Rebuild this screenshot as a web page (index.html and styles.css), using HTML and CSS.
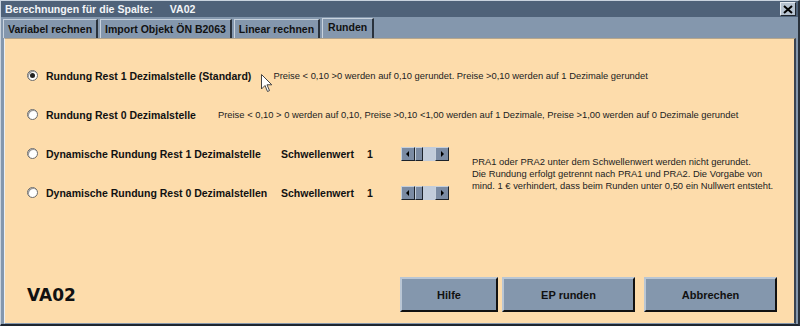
FILE: index.html
```html
<!DOCTYPE html>
<html lang="de">

<head>
    <meta charset="UTF-8">
    <title>Berechnungen für die Spalte</title>
    <link rel="stylesheet" href="styles.css">
</head>

<body>
    <div class="window">
        <div class="titlebar">
            <span class="title">Berechnungen für die Spalte:</span>
            <span class="title title-col">VA02</span>
            <button class="close-btn">
                <svg width="10" height="9" viewBox="0 0 10 9">
                    <path d="M1 1 L9 8 M9 1 L1 8" stroke="#000" stroke-width="2"/>
                </svg>
            </button>
        </div>

        <div class="tabs">
            <div class="tab">Variabel rechnen</div>
            <div class="tab">Import Objekt ÖN B2063</div>
            <div class="tab">Linear rechnen</div>
            <div class="tab active">Runden</div>
        </div>

        <div class="panel">
            <div class="row">
                <span class="radio checked"></span>
                <span class="label">Rundung Rest 1 Dezimalstelle (Standard)</span>
                <span class="desc">Preise &lt; 0,10 &gt;0 werden auf 0,10 gerundet. Preise &gt;0,10 werden auf 1 Dezimale gerundet</span>
                <!-- Mauszeiger aus dem Screenshot -->
                <svg class="cursor" width="12" height="19" viewBox="0 0 12 19">
                    <path d="M0.5 0.5 L0.5 15 L4 11.5 L6.5 17.5 L8.5 16.6 L6 10.8 L10.8 10.8 Z" fill="#fff" stroke="#444" stroke-width="1"/>
                </svg>
            </div>
            <div class="row">
                <span class="radio"></span>
                <span class="label">Rundung Rest 0 Dezimalstelle</span>
                <span class="desc">Preise &lt; 0,10 &gt; 0 werden auf 0,10, Preise &gt;0,10 &lt;1,00 werden auf 1 Dezimale, Preise &gt;1,00 werden auf 0 Dezimale gerundet</span>
            </div>

            <div class="dyn">
                <div class="dyn-rows">
                    <div class="row">
                        <span class="radio"></span>
                        <span class="label dyn-label">Dynamische Rundung Rest 1 Dezimalstelle</span>
                        <span class="label schwelle">Schwellenwert</span>
                        <span class="label wert">1</span>
                        <div class="scroller">
                            <span class="arrow left"></span>
                            <span class="thumb"></span>
                            <span class="track"></span>
                            <span class="arrow right"></span>
                        </div>
                    </div>
                    <div class="row">
                        <span class="radio"></span>
                        <span class="label dyn-label">Dynamische Rundung Rest 0 Dezimalstellen</span>
                        <span class="label schwelle">Schwellenwert</span>
                        <span class="label wert">1</span>
                        <div class="scroller">
                            <span class="arrow left"></span>
                            <span class="thumb"></span>
                            <span class="track"></span>
                            <span class="arrow right"></span>
                        </div>
                    </div>
                </div>
                <p class="note">PRA1 oder PRA2 unter dem Schwellenwert werden nicht gerundet.<br>
                    Die Rundung erfolgt getrennt nach PRA1 und PRA2. Die Vorgabe von<br>
                    mind. 1 € verhindert, dass beim Runden unter 0,50 ein Nullwert entsteht.</p>
            </div>

            <div class="footer">
                <div class="code">VA02</div>
                <button class="btn btn-hilfe">Hilfe</button>
                <button class="btn btn-ep">EP runden</button>
                <button class="btn btn-abbrechen">Abbrechen</button>
            </div>
        </div>
    </div>
</body>

</html>
```

FILE: styles.css
```css
body {
    margin: 0;
    padding: 0;
    font-family: "Liberation Sans", Arial, sans-serif;
    background-color: #1e2630;
}

.window {
    width: 800px;
    height: 326px;
    box-sizing: border-box;
    background-color: #8497ad;
    border-top: 1px solid #c9d3de;
    border-left: 1px solid #c9d3de;
    border-right: 2px solid #2a323c;
    border-bottom: 2px solid #1e2630;
    display: flex;
    flex-direction: column;
}

/* Titelleiste */

.titlebar {
    height: 16px;
    background-color: #4f6279;
    display: flex;
    align-items: center;
    padding: 0 2px 0 4px;
}

.title {
    color: #f2f4f7;
    font-weight: bold;
    font-size: 10.6px;
}

.title-col {
    margin-left: 17px;
}

.close-btn {
    margin-left: auto;
    width: 16px;
    height: 14px;
    padding: 0;
    background-color: #b7c3d1;
    border: 1px solid;
    border-color: #e6ebf1 #20262e #20262e #e6ebf1;
    display: flex;
    align-items: center;
    justify-content: center;
}

/* Reiter */

.tabs {
    display: flex;
    gap: 2px;
    padding: 2px 0 0 2px;
    height: 19px;
}

.tab {
    font-size: 10.5px;
    font-weight: bold;
    color: #111;
    padding: 3px 4px 0 4px;
    border-left: 1px solid #c9d3de;
    border-right: 2px solid #2a323c;
    border-top: 1px solid #c9d3de;
}

.tab.active {
    margin-top: -1px;
    padding: 2px 5px 0 5px;
    height: 18px;
}

/* Inhalt */

.panel {
    flex: 1;
    margin: 0 2px 0 3px;
    background-color: #fddcab;
    border-top: 1px solid #b4a58c;
    border-left: 1px solid #e8eef4;
    border-right: 2px solid #3a4350;
    border-bottom: 1px solid #8497ad;
    padding: 28px 0 0 22px;
    display: flex;
    flex-direction: column;
}

.row {
    display: flex;
    align-items: center;
    height: 17px;
    margin-bottom: 22px;
    position: relative;
}

.cursor {
    position: absolute;
    left: 234px;
    top: 7px;
}

.radio {
    flex-shrink: 0;
    width: 9px;
    height: 9px;
    border-radius: 50%;
    background-color: #fff;
    border: 1px solid #6b6b6b;
    box-shadow: inset 1px 1px 0 #999;
    margin-right: 8px;
    position: relative;
}

.radio.checked::after {
    content: "";
    position: absolute;
    left: 2px;
    top: 2px;
    width: 5px;
    height: 5px;
    border-radius: 50%;
    background-color: #222;
}

.label {
    flex-shrink: 0;
    font-size: 10.5px;
    font-weight: bold;
    color: #111;
    white-space: nowrap;
}

.desc {
    font-size: 9.4px;
    color: #222;
    margin-left: 22px;
    white-space: nowrap;
}

.dyn {
    display: flex;
    align-items: flex-start;
}

.dyn-rows {
    display: flex;
    flex-direction: column;
}

.dyn-label {
    width: 235px;
}

.schwelle {
    width: 86px;
}

.wert {
    width: 34px;
}

.note {
    margin: 11px 0 0 23px;
    font-size: 9.4px;
    line-height: 12px;
    color: #222;
    white-space: nowrap;
}

/* kleine Bildlaufleiste */

.scroller {
    flex-shrink: 0;
    display: flex;
    height: 14px;
    width: 48px;
}

.arrow {
    width: 12px;
    height: 12px;
    background-color: #7b8ba3;
    border: 1px solid;
    border-color: #c6d0dc #1c222a #1c222a #c6d0dc;
    position: relative;
}

.arrow::after {
    content: "";
    position: absolute;
    top: 3px;
    border-top: 3px solid transparent;
    border-bottom: 3px solid transparent;
}

.arrow.left::after {
    left: 4px;
    border-right: 3px solid #000;
}

.arrow.right::after {
    left: 5px;
    border-left: 3px solid #000;
}

.thumb {
    width: 6px;
    height: 12px;
    background-color: #7b8ba3;
    border: 1px solid;
    border-color: #c6d0dc #1c222a #1c222a #c6d0dc;
}

.track {
    flex: 1;
    background-color: #c2ccda;
}

/* Fußzeile */

.footer {
    margin-top: auto;
    display: flex;
    align-items: center;
    padding: 0 0 11px 0;
}

.code {
    font-family: "DejaVu Sans", sans-serif;
    font-size: 17px;
    font-weight: bold;
    color: #111;
    width: 373px;
}

.btn {
    height: 35px;
    background-color: #8497ad;
    border: 2px solid;
    border-color: #b9c6d4 #111 #111 #b9c6d4;
    font-family: "Liberation Sans", Arial, sans-serif;
    font-size: 11px;
    font-weight: bold;
    color: #111;
    cursor: pointer;
}

.btn-hilfe {
    width: 98px;
    margin-right: 4px;
}

.btn-ep {
    width: 133px;
    margin-right: 9px;
}

.btn-abbrechen {
    width: 133px;
}
```
